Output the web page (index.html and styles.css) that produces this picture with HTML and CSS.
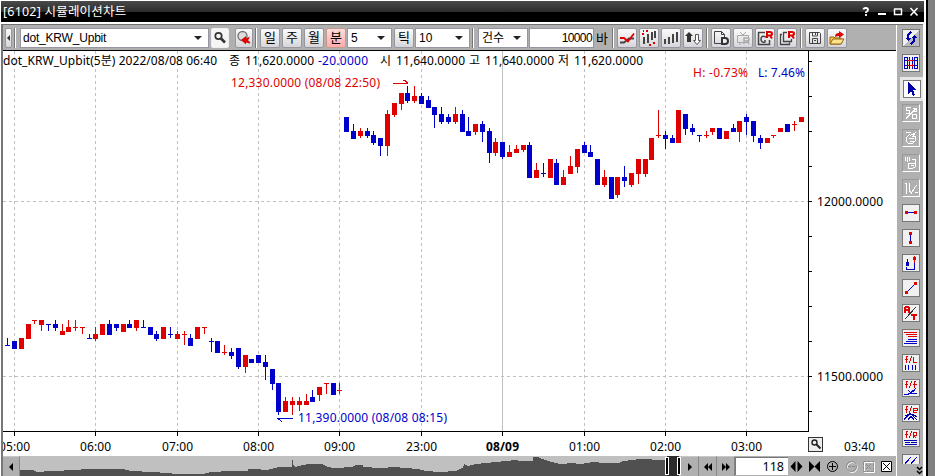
FILE: index.html
```html
<!DOCTYPE html>
<html lang="ko">
<head>
    <meta charset="UTF-8">
    <title>시뮬레이션차트</title>
    <link rel="stylesheet" href="styles.css">
</head>
<body>

<div class="window">
    <!-- Title bar -->
    <header class="titlebar">
        <span class="title">[6102] 시뮬레이션차트</span>
        <svg class="window-buttons" width="64" height="20" viewBox="860 2 64 20" fill="none" stroke="#fff">
            <path d="M863.5 9.5q0-1.5 2-1.5h.5q2 0 2 2 0 1-2 2.200v.8M866 14v2" stroke-width="1.800"/>
            <path d="M878 14h8" stroke-width="2"/>
            <path d="M894.500 9v5.500h7V9M894 9h8" stroke-width="1.500"/>
            <path d="M910.500 8l7 7.500m0-7.500l-7 7.500" stroke-width="1.600"/>
        </svg>
    </header>

    <div class="content">
        <main class="main">
            <!-- Toolbar -->
            <div class="toolbar">
                <button class="btn btn-tiny"><svg width="5" height="8"><path d="M4 1v6L1 4z" fill="#333"/></svg></button>
                <i class="sep sep-first"></i>
                <div class="combo combo-symbol"><span id="symbol">dot_KRW_Upbit</span></div>
                <button class="btn btn-flat">
                    <svg width="16" height="16" fill="none" stroke="#333"><circle cx="6.500" cy="6" r="3.200" stroke-width="1.700"/><path d="M9 8.500l4 4" stroke-width="2.600"/></svg>
                </button>
                <button class="btn btn-find">
                    <svg width="16" height="16" fill="none"><circle cx="6.500" cy="6" r="4.500" fill="#ddd" stroke="#777" stroke-width="1.400"/><path d="M9 9l5 4" stroke="#777" stroke-width="2"/><path d="M5 10l5-4v2.500l4-2-2 4 2 3-4-1v2z" fill="#e00000"/></svg>
                </button>
                <i class="sep sep-period"></i>
                <button class="btn">일</button>
                <button class="btn">주</button>
                <button class="btn">월</button>
                <button class="btn active">분</button>
                <div class="combo combo-min"><span>5</span></div>
                <button class="btn">틱</button>
                <div class="combo combo-tick"><span>10</span></div>
                <i class="sep sep-count"></i>
                <div class="combo combo-count"><span>건수</span></div>
                <div class="field">10000</div>
                <span class="unit">바</span>
                <i class="sep"></i>
                <button class="btn">
                    <svg width="18" height="18" fill="none" stroke-width="1.800"><path d="M2 13.500h4l5-4h5" stroke="#444"/><path d="M2 9h4l4 3.500 6-8" stroke="#e00000"/></svg>
                </button>
                <button class="btn">
                    <svg width="18" height="18" fill="none" stroke-width="2"><path d="M4 8v7M8 5v9M12 3v8M15 2v7" stroke="#444"/><path d="M2 5h2M6 2h2M9 16h2M13 14h2M3 2h1" stroke="#e00000"/></svg>
                </button>
                <button class="btn">
                    <svg width="18" height="18" fill="none" stroke="#444" stroke-width="2"><path d="M3 10v5M7 8v7M11 5v9M15 3v10"/></svg>
                </button>
                <button class="btn">
                    <svg width="18" height="18"><path d="M5 3l4 4H7v6H3V7H1z" fill="#333"/><path d="M11.500 5.500h3v6h2l-3.500 4-3.500-4h2z" fill="#fff" stroke="#555"/></svg>
                </button>
                <i class="sep"></i>
                <button class="btn">
                    <svg width="18" height="18" fill="none"><path d="M2.500 2.500h7l3 3v9h-10zM9.500 2.500v3h3" stroke="#444"/><path d="M10 9h3q3 0 3 3t-3 3h-3z" fill="#eee" stroke="#333" stroke-width="2"/></svg>
                </button>
                <button class="btn">
                    <svg width="18" height="18" fill="none" stroke="#aaa"><path d="M3.500 6.500h11v7h-11zM6 3l3 3 3-3M6 13v3"/><path d="M10 15V9h3q2 0 2 1.500T13 12h-3m3 0l2 3" stroke-width="1.500"/></svg>
                </button>
                <button class="btn">
                    <svg width="18" height="18" fill="none"><path d="M9 3.500H2.500v12h11V11M10 8q-5-2-5 2 0 4 4 3v-2" stroke="#444" stroke-width="1.500"/><path d="M11 9V3h3q2 0 2 1.700T14 6.500h-3m3 0l2 3" stroke="#e00000" stroke-width="2"/></svg>
                </button>
                <button class="btn">
                    <svg width="18" height="18" fill="none"><path d="M9 3.500H5.500v9h8V10M4 5.500H2.500v10h9v-2" stroke="#444" stroke-width="1.300"/><path d="M11 9V3h3q2 0 2 1.700T14 6.500h-3m3 0l2 3" stroke="#e00000" stroke-width="2"/></svg>
                </button>
                <i class="sep"></i>
                <button class="btn">
                    <svg width="18" height="18" fill="none" stroke="#444"><path d="M3.500 3.500h10l1 1v10h-11zM6.500 3.500v3.500h5v-3.500M6.500 14.500v-5h5v5M9.500 4v2M8 11.500h2"/></svg>
                </button>
                <button class="btn">
                    <svg width="18" height="18"><path d="M2 8h4l1 1h6v6H2z" fill="#f7c840" stroke="#946410"/><path d="M2 15l3-5h11l-3 5z" fill="#ffe48a" stroke="#946410"/><path d="M7 8q0-4 4-4V2l5 3.500L11 9V7q-2 0-4 1z" fill="#e00000"/></svg>
                </button>
            </div>

            <!-- Chart -->
            <svg id="chart" class="chart" width="893" height="405" viewBox="3 51 893 405">
                <g id="grid"></g>
                <g id="candles"></g>
                <g id="axis"></g>
                <g class="labels">
                    <text x="3" y="65" textLength="214">dot_KRW_Upbit(5분) 2022/08/08 06:40</text>
                    <text x="229" y="65">종</text>
                    <text x="245" y="65" textLength="69">11,620.0000</text>
                    <text x="318" y="65" textLength="50" class="down">-20.0000</text>
                    <text x="380" y="65">시</text>
                    <text x="396" y="65" textLength="69">11,640.0000</text>
                    <text x="469" y="65">고</text>
                    <text x="485" y="65" textLength="69">11,640.0000</text>
                    <text x="558" y="65">저</text>
                    <text x="574" y="65" textLength="69">11,620.0000</text>
                    <text x="693" y="77" textLength="55" class="up">H: -0.73%</text>
                    <text x="758" y="77" textLength="47" class="down">L: 7.46%</text>
                    <text x="231" y="87" textLength="149" class="up">12,330.0000 (08/08 22:50)</text>
                    <text x="298" y="422" textLength="149" class="down">11,390.0000 (08/08 08:15)</text>
                    <text x="817" y="206" textLength="66">12000.0000</text>
                    <text x="817" y="381" textLength="66">11500.0000</text>
                    <text x="844" y="451" textLength="31">03:40</text>
                </g>
                <path d="M393 83.500h15M403 80.500h2l3 3" fill="none" stroke="#e00000"/>
                <path d="M293 418.500h-15l4 3" fill="none" stroke="#0000cc"/>
                <g class="magnifier">
                    <rect x="808.500" y="437.500" width="14" height="14" fill="#eee" stroke="#333"/>
                    <circle cx="814.500" cy="442.500" r="2.500" fill="none" stroke="#222" stroke-width="1.400"/>
                    <path d="M816.500 444.500l4 4" stroke="#222" stroke-width="2"/>
                </g>
            </svg>

            <!-- Range navigator -->
            <div class="navigator">
                <button class="nav-btn nav-left"><svg width="6" height="10"><path d="M5 1v8L1 5z"/></svg></button>
                <svg class="overview" width="661" height="20" viewBox="20 456 661 20">
                    <path id="volume" fill="#505050"/>
                    <path d="M667 456h12v20h-12z" fill="#2b2b2b"/>
                    <path d="M665.500 457.500h3v17h-3zM677.500 457.500h3v17h-3z" fill="#000" stroke="#fff"/>
                </svg>
                <button class="nav-btn"><svg width="6" height="10"><path d="M1 1v8l4-4z"/></svg></button>
                <button class="nav-btn"><svg width="10" height="10"><path d="M5 1v8L1 5zM9 1v8L5 5z"/></svg></button>
                <button class="nav-btn"><svg width="10" height="10"><path d="M1 1v8l4-4zM5 1v8l4-4z"/></svg></button>
                <div class="bars">118</div>
                <svg class="zoom-tools" width="108" height="20" viewBox="788 456 108 20" fill="none" stroke="#000">
                    <path d="M795.500 461v11l-5-5.500zM797.500 461v11l5-5.500z" fill="#000" stroke="none"/>
                    <path d="M809 461v11l5.500-5.500zM820 461v11l-5.500-5.500z" fill="#000" stroke="none"/>
                    <circle cx="832.500" cy="466.500" r="5"/><path d="M829 466.500h7M832.500 463v7"/>
                    <g stroke="#fff"><circle cx="852.300" cy="467.500" r="5"/><path d="M864.500 462.500h10v10h-10z"/></g>
                    <g stroke="#888"><circle cx="851.500" cy="466.500" r="5"/><path d="M848 466.500h7M863.500 461.500h10v10h-10zM866 464l5 5m0-5l-5 5" stroke-dasharray="3 1"/></g>
                    <path d="M881.500 461.500h10v10h-10z" fill="#fff"/><path d="M883 463l7 7m0-7l-7 7"/>
                </svg>
            </div>
        </main>

        <!-- Drawing tools -->
        <aside class="tools">
            <button class="tool"><svg viewBox="0 0 16 16"><path d="M0 16L16 0v16z" fill="#bbb"/><path d="M8 1l-4 3v4H2l3 3 3-3H6V5l3-2zM8 15l4-3V8h2l-3-3-3 3h2v3l-3 2z" fill="#0000aa"/></svg></button>
            <button class="tool"><svg viewBox="0 0 16 16" fill="none"><path d="M1.500 2.500h3v11h-3zM11.500 2.500h3v11h-3zM1 5.500h4M1 10.500h4M11 5.500h4M11 10.500h4M6.500 2v12M9.500 2v12" stroke="#0000bb"/><path d="M5 5.500h6M5 10.500h6M6.500 4v3M9.500 9v3" stroke="#e00000"/></svg></button>
            <button class="tool selected"><svg viewBox="0 0 16 16"><path d="M4 1v12l3-3 2 5 2-1-2-5h4z" fill="#0000aa"/></svg></button>
            <button class="tool disabled"><svg viewBox="0 0 16 16"><path d="M7.500 2.500h-4v3h3v3h-4M3 13.500L13 3.500M9.500 3.500h4v3h-4M9.500 9.500v4h4v-4z"/></svg></button>
            <button class="tool disabled"><svg viewBox="0 0 16 16"><path d="M2.500 2.500h5M3.500 11.500v-4l3-3 1 1 5-3-3 4h3v4l-3 3h-4zM5.500 8.500h5M6.500 11.500h4"/></svg></button>
            <button class="tool disabled"><svg viewBox="0 0 16 16"><path d="M2.500 2v4M4.500 2v5M6.500 2v4M5.500 8.500h7v3l-3 2h-4zM8.500 4.500h4v3M7.500 10.500h3"/></svg></button>
            <button class="tool disabled"><svg viewBox="0 0 16 16"><path d="M1.500 3.500h2v10M6.500 3v8l2 2 5-8M11.500 12.500h3"/></svg></button>
            <button class="tool"><svg viewBox="0 0 16 16"><path d="M5 7.500h6" stroke="#0000cc"/><path d="M2 6h3v3H2zM11 6h3v3h-3z" fill="#e00000"/></svg></button>
            <button class="tool"><svg viewBox="0 0 16 16"><path d="M7.500 5v6" stroke="#0000cc"/><path d="M6 2h3v3H6zM6 11h3v3H6z" fill="#e00000"/></svg></button>
            <button class="tool"><svg viewBox="0 0 16 16"><path d="M4.500 4v4M3.500 12v2.500h8V7" fill="none" stroke="#0000bb"/><path d="M3 7h3v4H3z" fill="#0000bb"/><path d="M10 2h3v3h-3zM11 1h1v7h-1z" fill="#e00000"/></svg></button>
            <button class="tool"><svg viewBox="0 0 16 16"><path d="M4 12l8-8" stroke="#0000cc"/><path d="M2 11h3v3H2zM11 2h3v3h-3z" fill="#e00000"/></svg></button>
            <button class="tool"><svg viewBox="0 0 16 16" fill="none" stroke="#e00000" stroke-width="2"><path d="M2 8V3l1-1h2l1 1v5M2 5h4M8 10h6M11 9v6"/><path d="M2 14L13 2" stroke="#333" stroke-width="1"/></svg></button>
            <button class="tool"><svg viewBox="0 0 16 16"><path d="M1 2.500h13M3 4.500h11M5 6.500h9" stroke="#e00000"/><path d="M5 9.500h9M3 11.500h11M1 13.500h13" stroke="#0000cc"/></svg></button>
            <button class="tool"><svg viewBox="0 0 16 16" fill="none"><path d="M5 1.500H3.500V8M2 4.500h3M6 8l3-7M10.500 2v5.500H14" stroke="#e00000"/><path d="M2.500 10v5M5.500 10v5M9.500 10v5M12.500 10v5" stroke="#0000cc"/></svg></button>
            <button class="tool"><svg viewBox="0 0 16 16" fill="none"><path d="M5 1.500H3.500V8M2 4.500h3M6 8l3-7M13 1.500h-1.500V8M10 4.500h4" stroke="#e00000"/><path d="M1 14.500h4l8-6M5 10l3 3 6 1M6 14l6-4" stroke="#0000cc"/></svg></button>
            <button class="tool"><svg viewBox="0 0 16 16" fill="none"><path d="M5 1.500H3.500V8M2 4.500h3M6 8l3-7M10 5.500h4v-2h-3.500v4H14" stroke="#e00000"/><path d="M1 15l6-7 7 7M2 11q6-4 12 1M5 15l3-4 3 4" stroke="#0000aa" stroke-width="1.300"/></svg></button>
            <button class="tool"><svg viewBox="0 0 16 16" fill="none"><path d="M5 1.500H3.500V8M2 4.500h3M6 8l3-7M10.500 8V2.500h3v3h-3l3 3" stroke="#e00000"/><path d="M1 10.500h13M2 12.500h5M8 12.500h6M2 14.500h12" stroke="#0000aa"/></svg></button>
            <div class="tool-last">
                <button class="tool tool-cut"><svg viewBox="0 0 16 16"><path d="M1 10l7-8M7 10l7-8" stroke="#0000cc"/></svg></button>
                <svg class="more" width="7" height="9" fill="none" stroke="#000" stroke-width="1.500"><path d="M1 1l2.500 2.500L6 1M1 5l2.500 2.500L6 5"/></svg>
            </div>
        </aside>
    </div>
</div>

<script src="chart.js"></script>
</body>
</html>
```
FILE: styles.css
```css
* {
    box-sizing: border-box;
}

body {
    margin: 0;
    width: 935px;
    height: 476px;
    overflow: hidden;
    background: #808080;
    font-family: "Noto Sans", "Noto Sans CJK KR", sans-serif;
    font-size: 12px;
    color: #000;
}

svg {
    display: block;
    flex: none;
}

button {
    font: inherit;
    padding: 0;
    margin: 0;
}

.window {
    width: 928px;
    height: 476px;
    padding: 1px 2px 0 1px;
    background: #fff;
    border-right: 2px solid #000;
    display: flex;
    flex-direction: column;
}

.titlebar {
    width: 923px;
    height: 21px;
    flex: none;
    display: flex;
    justify-content: space-between;
    align-items: center;
    padding-left: 2px;
    color: #fff;
    background: linear-gradient(#4a4a4a, #2b2b2b 11px, #000 11px);
}

.title {
    font-size: 12.5px;
    line-height: 20px;
    letter-spacing: 0.2px;
    white-space: nowrap;
}

.content {
    display: flex;
    flex: 1;
    width: 922px;
    margin-top: 2px;
    border-top: 1px solid #707070;
    border-left: 2px solid #777;
}

.main {
    width: 893px;
    display: flex;
    flex-direction: column;
}

/* Toolbar */
.toolbar {
    height: 26px;
    flex: none;
    display: flex;
    align-items: center;
    gap: 2px;
    padding-left: 2px;
    background: #b0b0b0;
    border-bottom: 1px solid #000;
    font-family: "Liberation Sans", "Noto Sans CJK KR", sans-serif;
}

.btn {
    width: 20px;
    height: 20px;
    flex: none;
    display: flex;
    align-items: center;
    justify-content: center;
    border: 1px solid #9696a0;
    border-radius: 2px;
    background: linear-gradient(#fafafa, #e6e6e8 60%, #d6d6da);
    font-size: 13px;
    line-height: 16px;
}

.btn-tiny {
    width: 7px;
}

.btn-flat {
    width: 18px;
    border-color: #eee;
    background: #f5f5f5;
}

.btn-find {
    width: 18px;
    margin-left: 4px;
}

.btn.active {
    background: linear-gradient(#ffdcdc, #ffabab);
    border-color: #c59a8c;
}

.sep {
    width: 2px;
    height: 20px;
    margin: 0 1px;
    flex: none;
    background: #777;
    border-right: 1px solid #fff;
}

.sep-first {
    margin: 0 2px 0 0;
}

.sep-period {
    margin: 0 1px 0 0;
}

.sep-count {
    margin: 0 2px 0 0;
}

.combo {
    height: 20px;
    flex: none;
    display: flex;
    align-items: center;
    justify-content: space-between;
    padding: 0 6px 0 3px;
    background: #fff;
    border: 1px solid #9696a0;
    line-height: 16px;
}

.combo::after {
    content: "";
    border: 4px solid transparent;
    border-top-color: #222;
    border-bottom: 0;
}

.combo-symbol {
    width: 189px;
    padding-left: 2px;
}

#symbol {
    letter-spacing: -0.2px;
}

.combo-min {
    width: 45px;
    margin-left: -1px;
}

.combo-tick {
    width: 55px;
    margin-left: -1px;
}

.combo-count {
    width: 50px;
}

.field {
    width: 65px;
    height: 20px;
    margin-left: -1px;
    flex: none;
    padding-right: 1px;
    text-align: right;
    line-height: 18px;
    letter-spacing: -0.6px;
    background: #fff;
    border: 1px solid #9696a0;
}

.unit {
    width: 13px;
    font-size: 13px;
}

/* Chart */
.chart {
    background: #fff;
    shape-rendering: crispEdges;
}

.magnifier {
    shape-rendering: auto;
}

.chart text {
    white-space: pre;
}

.time-labels {
    text-anchor: middle;
}

.date {
    font-weight: bold;
}

.up {
    fill: #e00000;
}

.down {
    fill: #0000cc;
}

/* Range navigator */
.navigator {
    height: 20px;
    display: flex;
    background: #b0b0b0;
}

.nav-btn {
    width: 18px;
    height: 20px;
    flex: none;
    display: flex;
    align-items: center;
    justify-content: center;
    background: #b0b0b0;
    border: 0;
    border-right: 1px solid #888;
    border-top: 1px solid #c8c8c8;
}

.nav-left {
    width: 17px;
}

.overview {
    background: #c0c0c0;
    shape-rendering: crispEdges;
}

.bars {
    width: 53px;
    margin: 1px 0;
    flex: none;
    padding-right: 4px;
    background: #fff;
    border-top: 1px solid #777;
    border-left: 1px solid #777;
    text-align: right;
    line-height: 17px;
    font-size: 12.5px;
}

/* Drawing tools */
.tools {
    width: 27px;
    height: 451px;
    overflow: hidden;
    display: flex;
    flex-direction: column;
    gap: 7px;
    padding: 4px 0 0 5px;
    background: #b0b0b0;
    border-left: 1px solid #fff;
}

.tool {
    width: 18px;
    height: 18px;
    flex: none;
    background: #f0f0f0;
    border: 1px solid #777;
}

.tool svg {
    width: 16px;
    height: 16px;
    shape-rendering: crispEdges;
}

.tool.selected {
    position: relative;
    left: 1px;
    top: 1px;
    background: #fff;
    outline: 3px solid #e8e8e8;
}

.tool.disabled {
    background: #b0b0b0;
    border-color: #999 #fff #fff #999;
}

.tool.disabled path {
    fill: none;
    stroke: #fff;
}

.tool-last {
    position: relative;
}

.tool-cut {
    height: 10px;
    overflow: hidden;
    border-bottom: 0;
    display: block;
}

.more {
    position: absolute;
    left: 14px;
    top: 12px;
}
```
FILE: chart.js
```js
// [x, direction, high, bodyTop, bodyBottom, low]
const candles = [
    [7,'d',338,345,346,346],[14,'d',341,341,349,349],[21,'u',338,338,349,349],[28,'u',324,324,339,339],
    [34,'u',320,320,321,324],[41,'u',320,320,325,331],[48,'d',324,324,325,331],[55,'d',320,324,328,331],
    [62,'u',324,331,335,335],[68,'u',320,327,332,332],[75,'u',320,327,328,331],[82,'u',327,327,328,334],
    [89,'d',334,338,339,339],[95,'u',327,334,339,341],[102,'u',324,324,335,335],[109,'d',320,324,335,335],
    [116,'d',324,324,328,331],[123,'u',324,324,332,332],[129,'d',320,324,328,328],[136,'u',320,320,328,331],
    [143,'d',320,327,328,328],[150,'d',327,327,335,335],[156,'d',331,334,339,341],[163,'u',327,327,339,339],
    [170,'d',327,334,335,338],[177,'u',331,334,339,339],[184,'u',331,334,335,345],[190,'d',334,338,346,346],
    [197,'u',327,327,339,339],[204,'u',327,327,328,334],[211,'d',338,341,342,352],[217,'d',341,341,353,353],
    [224,'u',345,352,353,355],[231,'d',348,352,356,359],[238,'d',348,348,367,369],[245,'u',355,355,367,373],
    [251,'d',359,359,363,363],[258,'d',355,355,363,363],[265,'d',355,362,367,380],[272,'d',369,369,384,390],
    [278,'d',383,383,412,415],[285,'u',397,401,412,412],[292,'u',397,401,405,415],[299,'u',397,401,405,411],
    [306,'u',394,401,405,405],[312,'d',390,397,402,402],[319,'u',387,387,395,401],[326,'u',383,383,384,394],
    [333,'d',383,383,395,395],[339,'u',383,390,391,394],[346,'d',117,117,132,132],[353,'d',124,131,139,139],
    [360,'u',128,131,136,138],[367,'d',128,131,136,138],[373,'d',131,135,143,145],[380,'d',138,138,146,156],
    [387,'u',110,114,146,156],[394,'u',103,103,115,117],[401,'u',93,93,104,110],[407,'d',86,93,101,103],
    [414,'u',86,96,101,103],[421,'d',93,96,104,104],[428,'d',96,100,108,108],[434,'d',107,107,115,128],
    [441,'d',107,114,122,124],[448,'d',114,117,122,124],[455,'u',107,114,122,124],[462,'d',110,114,132,132],
    [468,'d',117,131,136,136],[475,'u',124,124,132,135],[482,'d',121,124,132,142],[489,'d',128,131,153,163],
    [495,'u',138,142,153,156],[502,'d',142,142,157,159],[509,'u',145,152,157,157],[516,'u',145,149,153,153],
    [523,'u',145,145,150,152],[529,'d',142,145,178,178],[536,'u',163,170,178,178],[543,'d',163,173,174,177],
    [550,'u',159,159,178,178],[556,'d',159,163,185,185],[563,'u',170,177,185,185],[570,'u',156,166,174,174],
    [577,'u',149,149,167,173],[584,'d',142,145,153,153],[590,'d',145,152,157,157],[597,'d',159,159,185,185],
    [604,'u',170,177,185,187],[611,'d',177,177,199,199],[617,'u',177,177,195,198],[624,'d',166,177,181,187],
    [631,'u',173,173,185,187],[638,'u',159,159,174,184],[645,'u',159,159,174,177],[651,'u',138,138,160,160],
    [658,'u',110,135,136,138],[665,'d',131,135,139,149],[672,'d',135,138,143,143],[678,'u',110,110,143,143],
    [685,'d',114,114,129,135],[692,'d',124,128,132,135],[699,'d',135,135,136,142],[706,'u',131,135,136,138],
    [712,'u',128,128,132,135],[719,'d',128,128,139,139],[726,'u',131,131,139,139],[733,'d',124,128,132,132],
    [739,'u',121,121,132,142],[746,'d',114,117,122,135],[753,'d',121,121,136,142],[760,'d',135,138,143,149],
    [767,'u',138,138,143,143],[773,'u',135,135,136,138],[780,'u',128,128,132,132],[787,'d',124,124,132,132],
    [794,'u',121,124,125,131],[801,'u',117,117,122,122]
];

const times = [
    [14, '05:00'], [95, '06:00'], [177, '07:00'], [258, '08:00'], [339, '09:00'],
    [421, '23:00'], [502, '08/09'], [584, '01:00'], [665, '02:00'], [746, '03:00']
];

// candles
document.getElementById('candles').innerHTML = candles.map(([x, dir, high, top, bottom, low]) =>
    `<path class="${dir === 'u' ? 'up' : 'down'}" d="M${x} ${high}h1V${low}h-1zM${x - 2} ${top}h5V${bottom}h-5z"/>`
).join('');

// grid
let grid = '';
times.forEach(([x, label]) => {
    const dash = label === '08/09' ? '' : 'stroke-dasharray="3 3"';
    grid += `<path d="M${x + 0.5} 51V431" stroke="#c0c0c0" ${dash}/>`;
});
[201, 376].forEach(y => {
    grid += `<path d="M3 ${y + 0.5}H808" stroke="#c0c0c0" stroke-dasharray="3 3"/>`;
});
document.getElementById('grid').innerHTML = grid;

// axes and time labels
let axis = '<path d="M3 431.5H809M808.5 51V432" stroke="#000"/><g class="time-labels">';
times.forEach(([x, label]) => {
    axis += `<path d="M${x + 0.5} 432v4" stroke="#000"/>`;
    axis += `<text x="${x + 0.5}" y="451" textLength="${label === '08/09' ? 33 : 31}" class="${label === '08/09' ? 'date' : ''}">${label}</text>`;
});
axis += '</g>';
for (let i = 0; i < 11; i++) {
    axis += `<path d="M809 ${Math.round(61 + i * 35) + 0.5}h3" stroke="#000"/>`;
}
document.getElementById('axis').innerHTML = axis;

// overview outline, one step per pixel between the points
const volume = [
    [20,470],[33,470],[37,472],[50,471],[77,470],[83,469],[107,469],[123,469],[130,471],[153,472],
    [167,473],[177,474],[203,474],[210,472],[230,471],[247,471],[248,469],[255,469],[267,470],[278,467],
    [291,467],[292,460],[293,465],[295,467],[302,465],[308,464],[322,464],[327,467],[335,468],[352,467],
    [355,465],[362,465],[363,467],[380,468],[395,467],[405,468],[418,469],[425,471],[440,472],[455,471],
    [462,468],[464,464],[467,466],[475,464],[485,463],[495,462],[505,461],[515,460],[520,461],[532,461],
    [533,457],[538,457],[542,459],[548,461],[560,464],[572,463],[580,464],[592,462],[605,463],[618,463],
    [622,461],[632,460],[638,459],[648,459],[655,460],[667,460]
];
let outline = 'M20 476V470';
for (let i = 1; i < volume.length; i++) {
    const [x0, y0] = volume[i - 1];
    const [x1, y1] = volume[i];
    for (let x = x0; x < x1; x++) {
        outline += `V${Math.round(y0 + (y1 - y0) * (x - x0) / (x1 - x0))}H${x + 1}`;
    }
}
document.getElementById('volume').setAttribute('d', outline + 'V476z');
```
